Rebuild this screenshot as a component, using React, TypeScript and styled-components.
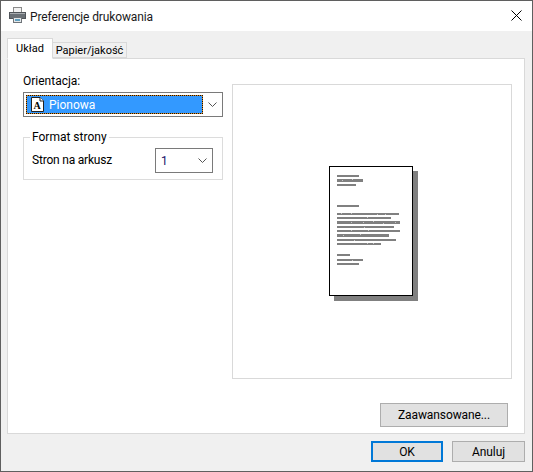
import styled, { createGlobalStyle } from "styled-components";

const GlobalStyle = createGlobalStyle`
  html, body {
    margin: 0;
    padding: 0;
    background: #f0f0f0;
  }
  * {
    box-sizing: border-box;
  }
`;

const Window = styled.div`
  width: 533px;
  height: 472px;
  display: flex;
  flex-direction: column;
  border: 1px solid #5f5f5f;
  background: #f0f0f0;
  font-family: Roboto, "Open Sans", sans-serif;
  font-size: 12px;
  color: #000;
  overflow: hidden;
`;

const TitleBar = styled.div`
  height: 30px;
  flex: none;
  display: flex;
  align-items: center;
  background: #fff;
  padding: 0 10px 0 8px;
  gap: 4px;
`;

const TitleText = styled.span`
  flex: 1;
  color: #1a1a1a;
  letter-spacing: -0.13px;
  padding-top: 1px;
`;

const Body = styled.div`
  flex: 1;
  display: flex;
  flex-direction: column;
  padding: 7px 7px 9px 6px;
`;

const TabStrip = styled.div`
  height: 20px;
  flex: none;
  display: flex;
  align-items: flex-end;
  position: relative;
  z-index: 1;
`;

const Tab = styled.div<{ $active?: boolean }>`
  display: flex;
  align-items: center;
  justify-content: center;
  border: 1px solid #d9d9d9;
  font-size: 11px;
  height: ${(p) => (p.$active ? "21px" : "16px")};
  width: ${(p) => (p.$active ? "46px" : "74px")};
  margin-bottom: ${(p) => (p.$active ? "-1px" : "0")};
  background: ${(p) => (p.$active ? "#fff" : "#f0f0f0")};
  border-bottom-color: ${(p) => (p.$active ? "#fff" : "#d9d9d9")};
  border-left-width: ${(p) => (p.$active ? "1px" : "0")};
`;

const Panel = styled.div`
  height: 376px;
  flex: none;
  display: flex;
  flex-direction: column;
  border: 1px solid #d9d9d9;
  background: #fff;
  padding: 14px 12px 6px 15px;
`;

const PanelMain = styled.div`
  flex: 1;
  display: flex;
  gap: 9px;
`;

const LeftColumn = styled.div`
  width: 200px;
  flex: none;
  display: flex;
  flex-direction: column;
`;

const FieldLabel = styled.div`
  height: 19px;
  line-height: 17px;
`;

const Combo = styled.div`
  height: 25px;
  display: flex;
  align-items: center;
  border: 1px solid #7a7a7a;
  padding: 2px 0 2px 2px;
`;

const SelectedItem = styled.div`
  width: 177px;
  height: 19px;
  display: flex;
  align-items: center;
  gap: 5px;
  padding-left: 4px;
  background: #3399ff;
  color: #fff;
  border: 1px solid #e08a20;
  outline: 1px dotted #111;
  outline-offset: -1px;
`;

const ChevronBox = styled.div`
  flex: 1;
  display: flex;
  align-items: center;
  justify-content: center;
`;

const Group = styled.fieldset`
  margin: 12px 0 0;
  padding: 0;
  height: 51px;
  border: 1px solid #dcdcdc;
  display: flex;
`;

const GroupTitle = styled.legend`
  margin-left: 6px;
  padding: 0 2px;
  line-height: 16px;
`;

const GroupRow = styled.div`
  width: 100%;
  display: flex;
  align-items: flex-start;
  justify-content: space-between;
  padding: 3px 9px 0 8px;
`;

const RowLabel = styled.span`
  line-height: 16px;
  margin-top: 4px;
  letter-spacing: -0.2px;
`;

const SmallSelect = styled.div`
  width: 58px;
  height: 25px;
  display: flex;
  align-items: center;
  justify-content: space-between;
  border: 1px solid #7a7a7a;
  padding: 0 5px 0 5px;
  color: #20106a;
`;

const Preview = styled.div`
  width: 280px;
  height: 295px;
  margin-top: 11px;
  flex: none;
  display: flex;
  align-items: center;
  justify-content: center;
  border: 1px solid #d9d9d9;
  padding: 4px 0 0 2px;
`;

const PanelFooter = styled.div`
  display: flex;
  justify-content: flex-end;
  padding-right: 4px;
`;

const Button = styled.div<{ $width: number; $height: number; $default?: boolean }>`
  width: ${(p) => p.$width}px;
  height: ${(p) => p.$height}px;
  display: flex;
  align-items: center;
  justify-content: center;
  background: #e1e1e1;
  letter-spacing: -0.1px;
  border: ${(p) => (p.$default ? "2px solid #0078d7" : "1px solid #adadad")};
`;

const DialogFooter = styled.div`
  flex: 1;
  display: flex;
  justify-content: flex-end;
  align-items: flex-end;
  gap: 9px;
`;

const PrinterIcon = () => (
  <svg width="17" height="17" viewBox="0 0 17 17" style={{ display: "block", marginBottom: 2 }}>
    <rect x="4.5" y="0.5" width="8" height="6" fill="#f2f2f2" stroke="#8a8a8a" />
    <rect x="0.5" y="5.5" width="16" height="6" fill="#6a7076" stroke="#50555a" />
    <rect x="1" y="6" width="15" height="1" fill="#a8acb0" />
    <rect x="4.5" y="10.5" width="8" height="5" fill="#e4e8ea" stroke="#6f7479" />
    <rect x="6" y="12" width="5" height="2" fill="#5f9fc0" />
  </svg>
);

const CloseIcon = () => (
  <svg width="11" height="11" viewBox="0 0 11 11" style={{ display: "block", marginBottom: 2 }}>
    <path d="M0.5 0.5L10.5 10.5M10.5 0.5L0.5 10.5" stroke="#000" fill="none" />
  </svg>
);

const Chevron = () => (
  <svg width="9" height="5" viewBox="0 0 9 5" style={{ display: "block" }}>
    <path d="M0.5 0.5L4.5 4.5L8.5 0.5" stroke="#555" fill="none" />
  </svg>
);

const PortraitIcon = () => (
  <svg width="13" height="15" viewBox="0 0 13 15" style={{ display: "block" }}>
    <path d="M0.5 0.5H9L12.5 4V14.5H0.5Z" fill="#fff" stroke="#222" />
    <path d="M9 0.5V4H12.5" fill="#fff" stroke="#222" />
    <text x="2.5" y="11.5" fontFamily="Liberation Serif, serif" fontWeight="700" fontSize="10" fill="#000">
      A
    </text>
  </svg>
);

// y, width, height of each text line on the sample page
const textBars: [number, number, number][] = [
  [9, 22, 2],
  [13, 26, 3],
  [18, 19, 2],
  [39, 22, 2],
  [47, 62, 2],
  [51, 54, 2],
  [55, 63, 3],
  [60, 57, 2],
  [64, 63, 2],
  [68, 52, 3],
  [73, 59, 2],
  [77, 44, 2],
  [88, 13, 2],
  [93, 26, 2],
  [97, 22, 2],
];

// pale pixels that break up the text lines
const specks: [number, number][] = [
  [13, 14], [23, 13], [12, 47], [22, 47], [48, 48], [56, 48], [38, 51],
  [22, 56], [34, 56], [44, 55], [54, 57], [66, 56], [35, 61], [22, 64],
  [39, 64], [14, 69], [31, 68], [25, 74], [38, 77], [44, 77], [23, 94],
];

const PagePreview = () => (
  <svg width="89" height="135" viewBox="0 0 89 135" style={{ display: "block" }}>
    <rect x="5" y="5" width="84" height="130" fill="#808080" />
    <rect x="0.5" y="0.5" width="83" height="129" fill="#fff" stroke="#000" />
    {textBars.map(([y, w, h]) => (
      <rect key={y} x={8} y={y} width={w} height={h} fill="#808080" />
    ))}
    {specks.map(([x, y]) => (
      <rect key={`${x}-${y}`} x={x} y={y} width={1} height={1} fill="#c8c8c8" />
    ))}
  </svg>
);

const App = () => {
  return (
    <>
      <GlobalStyle />
      <Window>
        <TitleBar>
          <PrinterIcon />
          <TitleText>Preferencje drukowania</TitleText>
          <CloseIcon />
        </TitleBar>
        <Body>
          <TabStrip>
            <Tab $active>Układ</Tab>
            <Tab>Papier/jakość</Tab>
          </TabStrip>
          <Panel>
            <PanelMain>
              <LeftColumn>
                <FieldLabel>Orientacja:</FieldLabel>
                <Combo>
                  <SelectedItem>
                    <PortraitIcon />
                    Pionowa
                  </SelectedItem>
                  <ChevronBox>
                    <Chevron />
                  </ChevronBox>
                </Combo>
                <Group>
                  <GroupTitle>Format strony</GroupTitle>
                  <GroupRow>
                    <RowLabel>Stron na arkusz</RowLabel>
                    <SmallSelect>
                      1
                      <Chevron />
                    </SmallSelect>
                  </GroupRow>
                </Group>
              </LeftColumn>
              <Preview>
                <PagePreview />
              </Preview>
            </PanelMain>
            <PanelFooter>
              <Button $width={128} $height={24}>
                Zaawansowane...
              </Button>
            </PanelFooter>
          </Panel>
          <DialogFooter>
            <Button $width={72} $height={21} $default>
              OK
            </Button>
            <Button $width={73} $height={21}>
              Anuluj
            </Button>
          </DialogFooter>
        </Body>
      </Window>
    </>
  );
};

export default App;
